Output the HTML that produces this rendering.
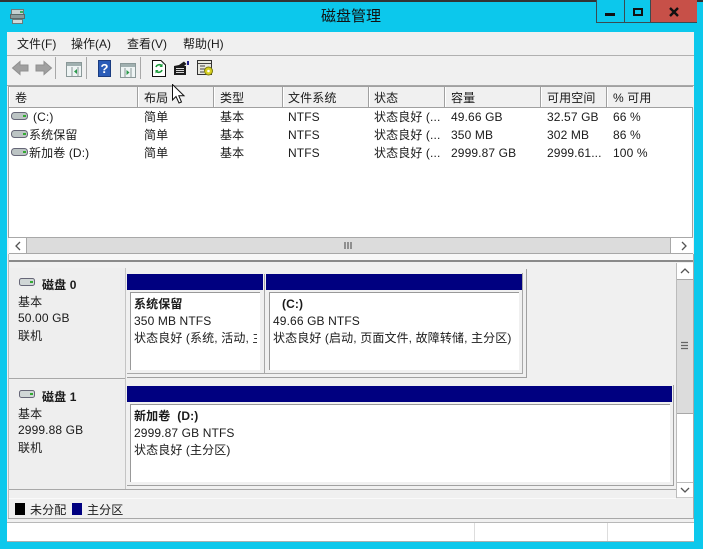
<!DOCTYPE html>
<html><head><meta charset="utf-8">
<style>
html,body{margin:0;padding:0}
body{width:703px;height:549px;overflow:hidden;position:relative;background:#0cc8ec;font-family:"Liberation Sans","Noto Sans CJK SC",sans-serif;font-size:12px;color:#1a1a1a}
.a{position:absolute}
.t{position:absolute;white-space:nowrap;line-height:16px;font-size:12px;letter-spacing:.12px}
.b{font-weight:bold}
.hd{position:absolute;top:87px;height:20px;background:#f0f0f0;border-right:1px solid #a0a0a0;box-shadow:inset 1px 0 0 #fff;box-sizing:border-box}
.sep{position:absolute;top:57px;width:1px;height:22px;background:#a8a8a8}
</style></head><body>
<div class="a" style="left:0;top:0;width:703px;height:2px;background:#333"></div>
<svg class="a" style="left:9px;top:8px" width="17" height="17" viewBox="0 0 17 17"><rect x="2.5" y="1.5" width="12" height="5" fill="#c4d0d0" stroke="#6a7a7a"/><rect x="1.5" y="6.5" width="14" height="4" fill="#8a9a9a" stroke="#5a6868"/><rect x="11" y="3" width="3" height="2" fill="#3bb060"/><rect x="3.5" y="11.5" width="10" height="4" fill="#d0d8d8" stroke="#6a7a7a"/></svg>
<div class="t" style="left:321px;top:8px;font-size:15px;line-height:18px;letter-spacing:0;color:#111">磁盘管理</div>
<!-- window buttons -->
<div class="a" style="left:596px;top:0;width:101px;height:23px;background:#0cc8ec;border:1px solid #3a4a50;border-top:0;box-sizing:border-box"></div>
<div class="a" style="left:624px;top:0;width:1px;height:22px;background:#3a4a50"></div>
<div class="a" style="left:650px;top:0;width:47px;height:23px;background:#c75048;border-left:1px solid #3a4a50;border-bottom:1px solid #3a4a50;box-sizing:border-box"></div>
<div class="a" style="left:605px;top:13px;width:10px;height:3px;background:#111"></div>
<div class="a" style="left:633px;top:8px;width:10px;height:8px;border:2px solid #111;box-sizing:border-box"></div>
<svg class="a" style="left:668px;top:7px" width="12" height="10" viewBox="0 0 12 10"><path d="M2 1 L10 9 M10 1 L2 9" stroke="#111" stroke-width="2.4" fill="none"/></svg>
<!-- client -->
<div class="a" style="left:7px;top:32px;width:687px;height:510px;background:#f0f0f0"></div>
<div class="t" style="left:17px;top:36px;letter-spacing:0">文件(F)</div>
<div class="t" style="left:71px;top:36px;letter-spacing:0">操作(A)</div>
<div class="t" style="left:127px;top:36px;letter-spacing:0">查看(V)</div>
<div class="t" style="left:183px;top:36px;letter-spacing:0">帮助(H)</div>
<div class="a" style="left:7px;top:55px;width:687px;height:1px;background:#b0b0b0"></div>
<!-- toolbar -->
<svg class="a" style="left:11px;top:59px" width="42" height="18" viewBox="0 0 42 18"><path d="M1.5 9 L9 2.5 V6 H17 V12 H9 V15.5 Z" fill="#a0a0a0" stroke="#909090"/><path d="M40.5 9 L33 2.5 V6 H25 V12 H33 V15.5 Z" fill="#a0a0a0" stroke="#909090"/></svg>
<div class="sep" style="left:55px"></div>
<svg class="a" style="left:66px;top:62px" width="16" height="15" viewBox="0 0 16 15"><rect x=".5" y=".5" width="15" height="14" fill="#eef4f4" stroke="#8a9898"/><rect x="1" y="1" width="14" height="3" fill="#a0b0b0"/><path d="M6 5 V14 M12 5 V14" stroke="#8a9898"/><path d="M11 7 L8 9.5 L11 12 Z" fill="#2a9a4a"/></svg>
<div class="sep" style="left:86px"></div>
<div class="a" style="left:98px;top:60px;width:13px;height:17px;background:#2a5cb8;border:1px solid #1a3c80;box-sizing:border-box;color:#fff;font:bold 13px/15px 'Liberation Sans',sans-serif;text-align:center">?</div>
<svg class="a" style="left:120px;top:63px" width="16" height="15" viewBox="0 0 16 15"><rect x=".5" y=".5" width="15" height="14" fill="#eef4f4" stroke="#8a9898"/><rect x="1" y="1" width="14" height="3" fill="#a0b0b0"/><path d="M5 5 V14 M11 5 V14" stroke="#8a9898"/><path d="M6.5 7 L9.5 9.5 L6.5 12 Z" fill="#2a9a4a"/></svg>
<div class="sep" style="left:140px"></div>
<svg class="a" style="left:152px;top:60px" width="14" height="17" viewBox="0 0 14 17"><path d="M.5 .5 H9 L13.5 5 V16.5 H.5 Z" fill="#fff" stroke="#111"/><path d="M4 7 A3.5 3.5 0 0 1 10 6 M10 10 A3.5 3.5 0 0 1 4 11" stroke="#1a9a3a" stroke-width="1.6" fill="none"/><path d="M10.5 3.5 V7 H7.5 Z M3.5 13.5 V10 H6.5 Z" fill="#1a9a3a"/></svg>
<svg class="a" style="left:173px;top:60px" width="17" height="16" viewBox="0 0 17 16"><path d="M1 6 L6 5 L11 1.5 L13.5 4 L11 6 H13 V15 H1 Z" fill="#1c1c1c"/><path d="M3 8.5 H11 M3 10.5 H11 M3 12.5 H11" stroke="#d8d8d8"/><path d="M15 1 V5" stroke="#23238a" stroke-width="2"/></svg>
<svg class="a" style="left:197px;top:60px" width="17" height="17" viewBox="0 0 17 17"><rect x=".5" y=".5" width="14" height="14" fill="#e8e8e0" stroke="#333"/><path d="M1 3.5 H14 M3 6 H8 M3 9 H8 M3 12 H7" stroke="#444"/><circle cx="11.5" cy="11" r="4" fill="#d8d020" stroke="#7a7a10"/><circle cx="11.5" cy="11" r="1.3" fill="#fff"/></svg>
<!-- list frame -->
<div class="a" style="left:7px;top:85px;width:687px;height:1px;background:#a8a8a8"></div>
<div class="a" style="left:8px;top:86px;width:685px;height:152px;background:#fff;border:1px solid #a0a0a0;box-sizing:border-box"></div>
<div class="hd" style="left:9px;width:129px"></div>
<div class="hd" style="left:138px;width:76px"></div>
<div class="hd" style="left:214px;width:69px"></div>
<div class="hd" style="left:283px;width:86px"></div>
<div class="hd" style="left:369px;width:76px"></div>
<div class="hd" style="left:445px;width:96px"></div>
<div class="hd" style="left:541px;width:66px"></div>
<div class="hd" style="left:607px;width:86px;border-right:0"></div>
<div class="a" style="left:9px;top:107px;width:684px;height:1px;background:#a0a0a0"></div>
<div class="t" style="left:15px;top:90px">卷</div>
<div class="t" style="left:144px;top:90px">布局</div>
<div class="t" style="left:220px;top:90px">类型</div>
<div class="t" style="left:288px;top:90px">文件系统</div>
<div class="t" style="left:374px;top:90px">状态</div>
<div class="t" style="left:451px;top:90px">容量</div>
<div class="t" style="left:547px;top:90px">可用空间</div>
<div class="t" style="left:613px;top:90px">% 可用</div>
<!-- rows -->
<svg class="a" style="left:11px;top:112px" width="17" height="8"><rect x=".5" y=".5" width="16" height="7" rx="3" fill="#bcc4c4" stroke="#667"/><rect x="12" y="3" width="3" height="2" fill="#3a3"/></svg>
<svg class="a" style="left:11px;top:130px" width="17" height="8"><rect x=".5" y=".5" width="16" height="7" rx="3" fill="#bcc4c4" stroke="#667"/><rect x="12" y="3" width="3" height="2" fill="#3a3"/></svg>
<svg class="a" style="left:11px;top:148px" width="17" height="8"><rect x=".5" y=".5" width="16" height="7" rx="3" fill="#bcc4c4" stroke="#667"/><rect x="12" y="3" width="3" height="2" fill="#3a3"/></svg>
<div class="t" style="left:33px;top:109px">(C:)</div>
<div class="t" style="left:29px;top:127px">系统保留</div>
<div class="t" style="left:29px;top:145px">新加卷 (D:)</div>
<div class="t" style="left:144px;top:109px">简单</div><div class="t" style="left:144px;top:127px">简单</div><div class="t" style="left:144px;top:145px">简单</div>
<div class="t" style="left:220px;top:109px">基本</div><div class="t" style="left:220px;top:127px">基本</div><div class="t" style="left:220px;top:145px">基本</div>
<div class="t" style="left:288px;top:109px">NTFS</div><div class="t" style="left:288px;top:127px">NTFS</div><div class="t" style="left:288px;top:145px">NTFS</div>
<div class="t" style="left:374px;top:109px">状态良好 (...</div><div class="t" style="left:374px;top:127px">状态良好 (...</div><div class="t" style="left:374px;top:145px">状态良好 (...</div>
<div class="t" style="left:451px;top:109px">49.66 GB</div><div class="t" style="left:451px;top:127px">350 MB</div><div class="t" style="left:451px;top:145px">2999.87 GB</div>
<div class="t" style="left:547px;top:109px">32.57 GB</div><div class="t" style="left:547px;top:127px">302 MB</div><div class="t" style="left:547px;top:145px">2999.61...</div>
<div class="t" style="left:613px;top:109px">66 %</div><div class="t" style="left:613px;top:127px">86 %</div><div class="t" style="left:613px;top:145px">100 %</div>
<!-- h scrollbar -->
<div class="a" style="left:9px;top:237px;width:684px;height:17px;background:#dcdcdc;border-top:1px solid #a8a8a8;border-bottom:1px solid #a8a8a8;box-sizing:border-box"></div>
<div class="a" style="left:9px;top:238px;width:17px;height:15px;background:#fff;border-right:1px solid #a8a8a8"></div>
<div class="a" style="left:670px;top:238px;width:23px;height:15px;background:#fff;border-left:1px solid #a8a8a8;box-sizing:border-box"></div>
<svg class="a" style="left:14px;top:241px" width="8" height="10"><path d="M6 1 L2 5 L6 9" stroke="#555" stroke-width="1.3" fill="none"/></svg>
<svg class="a" style="left:680px;top:241px" width="8" height="10"><path d="M2 1 L6 5 L2 9" stroke="#555" stroke-width="1.3" fill="none"/></svg>
<svg class="a" style="left:344px;top:241px" width="9" height="9"><path d="M1 1V8M4 1V8M7 1V8" stroke="#666" stroke-width="1.3"/></svg>
<div class="a" style="left:9px;top:254px;width:684px;height:6px;background:#f8f8f8"></div>
<div class="a" style="left:9px;top:260px;width:684px;height:2px;background:#8a8a8a"></div>
<div class="a" style="left:8px;top:254px;width:1px;height:265px;background:#bbb"></div>
<div class="a" style="left:693px;top:254px;width:1px;height:265px;background:#aaa"></div>
<!-- disk 0 -->
<div class="a" style="left:9px;top:268px;width:116px;height:110px;background:#eee"></div>
<div class="a" style="left:125px;top:268px;width:1px;height:222px;background:#c4c4c4"></div>
<svg class="a" style="left:19px;top:278px" width="16" height="8"><rect x=".5" y=".5" width="15" height="7" rx="2" fill="#d0d6d6" stroke="#667"/><rect x="11" y="3" width="3" height="2" fill="#3a3"/></svg>
<div class="t b" style="left:42px;top:277px">磁盘 0</div>
<div class="t" style="left:18px;top:294px">基本</div>
<div class="t" style="left:18px;top:310px">50.00 GB</div>
<div class="t" style="left:18px;top:328px">联机</div>
<!-- partition frame -->
<div class="a" style="left:127px;top:269px;width:400px;height:109px;background:#f0f0f0;border-right:1px solid #a0a0a0;border-bottom:1px solid #a0a0a0;box-sizing:border-box"></div>
<div class="a" style="left:127px;top:274px;width:136px;height:16px;background:#000080"></div>
<div class="a" style="left:266px;top:274px;width:256px;height:16px;background:#000080"></div>
<div class="a" style="left:264px;top:274px;width:1px;height:100px;background:#a8a8a8"></div>
<div class="a" style="left:522px;top:273px;width:1px;height:101px;background:#a8a8a8"></div>
<div class="a" style="left:127px;top:373px;width:396px;height:1px;background:#a8a8a8"></div>
<div class="a" style="left:130px;top:292px;width:130px;height:78px;background:#fff;border-left:1px solid #999;border-top:1px solid #999;box-sizing:border-box"></div>
<div class="a" style="left:269px;top:292px;width:250px;height:78px;background:#fff;border-left:1px solid #999;border-top:1px solid #999;box-sizing:border-box"></div>
<div class="t b" style="left:134px;top:296px">系统保留</div>
<div class="t" style="left:134px;top:313px">350 MB NTFS</div>
<div class="a" style="left:134px;top:330px;width:123px;height:16px;overflow:hidden"><div class="t" style="left:0;top:0">状态良好 (系统, 活动, 主分区)</div></div>
<div class="t b" style="left:282px;top:296px">(C:)</div>
<div class="t" style="left:273px;top:313px">49.66 GB NTFS</div>
<div class="t" style="left:273px;top:330px">状态良好 (启动, 页面文件, 故障转储, 主分区)</div>
<!-- disk 1 -->
<div class="a" style="left:9px;top:378px;width:116px;height:1px;background:#a8a8a8"></div>
<div class="a" style="left:9px;top:380px;width:116px;height:110px;background:#eee"></div>
<div class="a" style="left:9px;top:489px;width:667px;height:1px;background:#a8a8a8"></div>
<svg class="a" style="left:19px;top:390px" width="16" height="8"><rect x=".5" y=".5" width="15" height="7" rx="2" fill="#d0d6d6" stroke="#667"/><rect x="11" y="3" width="3" height="2" fill="#3a3"/></svg>
<div class="t b" style="left:42px;top:389px">磁盘 1</div>
<div class="t" style="left:18px;top:406px">基本</div>
<div class="t" style="left:18px;top:422px">2999.88 GB</div>
<div class="t" style="left:18px;top:440px">联机</div>
<div class="a" style="left:127px;top:386px;width:545px;height:16px;background:#000080"></div>
<div class="a" style="left:130px;top:404px;width:540px;height:78px;background:#fff;border-left:1px solid #999;border-top:1px solid #999;box-sizing:border-box"></div>
<div class="a" style="left:127px;top:485px;width:547px;height:1px;background:#a0a0a0"></div>
<div class="a" style="left:673px;top:385px;width:1px;height:100px;background:#a0a0a0"></div>
<div class="t b" style="left:134px;top:408px">新加卷 &nbsp;(D:)</div>
<div class="t" style="left:134px;top:425px">2999.87 GB NTFS</div>
<div class="t" style="left:134px;top:442px">状态良好 (主分区)</div>
<!-- v scrollbar -->
<div class="a" style="left:676px;top:263px;width:17px;height:235px;background:#fff"></div>
<div class="a" style="left:676px;top:279px;width:17px;height:135px;background:#dcdcdc;border-top:1px solid #a8a8a8;border-bottom:1px solid #a8a8a8;box-sizing:border-box"></div>
<div class="a" style="left:676px;top:482px;width:17px;height:1px;background:#bbb"></div>
<div class="a" style="left:676px;top:497px;width:17px;height:1px;background:#ccc"></div>
<div class="a" style="left:676px;top:263px;width:1px;height:235px;background:#bbb"></div>
<svg class="a" style="left:680px;top:267px" width="10" height="8"><path d="M1 6 L5 2 L9 6" stroke="#555" stroke-width="1.3" fill="none"/></svg>
<svg class="a" style="left:680px;top:486px" width="10" height="8"><path d="M1 2 L5 6 L9 2" stroke="#555" stroke-width="1.3" fill="none"/></svg>
<svg class="a" style="left:680px;top:341px" width="9" height="10"><path d="M1 1.5H8M1 4.5H8M1 7.5H8" stroke="#666" stroke-width="1.3"/></svg>
<!-- legend -->
<div class="a" style="left:9px;top:498px;width:667px;height:1px;background:#fafafa"></div>
<div class="a" style="left:15px;top:503px;width:10px;height:12px;background:#000"></div>
<div class="t" style="left:30px;top:502px">未分配</div>
<div class="a" style="left:72px;top:503px;width:10px;height:12px;background:#000080"></div>
<div class="t" style="left:87px;top:502px">主分区</div>
<div class="a" style="left:8px;top:518px;width:686px;height:1px;background:#a8a8a8"></div>
<!-- status -->
<div class="a" style="left:7px;top:522px;width:687px;height:20px;background:#fff;border-top:1px solid #b8b8b8;border-bottom:1px solid #a8b0b0;box-sizing:border-box"></div>
<div class="a" style="left:474px;top:523px;width:1px;height:18px;background:#ddd"></div>
<div class="a" style="left:607px;top:523px;width:1px;height:18px;background:#ddd"></div>
<!-- cursor -->
<svg class="a" style="left:172px;top:84px" width="14" height="21" viewBox="0 0 14 21"><path d="M.5 .5 V16 L4 12.5 L7 19 L9.5 18 L6.8 11.8 H12 Z" fill="#fff" stroke="#111"/></svg>
</body></html>
